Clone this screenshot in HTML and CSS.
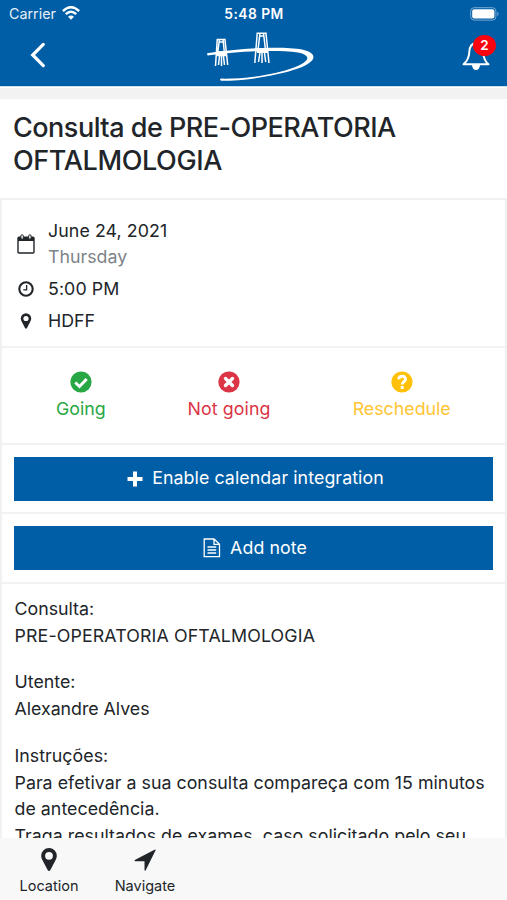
FILE: index.html
```html
<!DOCTYPE html>
<html lang="pt">
<head>
<meta charset="utf-8">
<title>Consulta</title>
<link rel="stylesheet" href="styles.css">
</head>
<body>
<div class="app">
  <header class="header">
    <div class="status">
      <div class="carrier"><span>Carrier</span>
        <svg width="18" height="14" viewBox="0 0 18 14" fill="none" stroke="#fff" stroke-width="2.5"><path d="M.9 5.1Q9-2.5 17.1 5.1M3.8 8.1Q9 3.3 14.2 8.1"/><path d="M9 13.8 6 10.7Q9 8.3 12 10.7Z" fill="#fff" stroke="none"/></svg>
      </div>
      <div class="time">5:48 PM</div>
      <svg class="battery" width="30" height="14" viewBox="0 0 30 14"><rect x=".7" y=".7" width="25.2" height="12.4" rx="3.4" fill="none" stroke="#79a9d3"/><rect x="2.2" y="2.2" width="22.2" height="9.4" rx="2" fill="#fff"/><path d="M27.3 4.6Q29.8 7 27.3 9.2Z" fill="#79a9d3"/></svg>
    </div>
    <div class="nav">
      <svg class="back" width="16" height="26" viewBox="0 0 16 26" fill="none" stroke="#fff" stroke-width="3.2" stroke-linecap="round"><path d="M13.3 2.4 2.7 13 13.3 23.6"/></svg>
      <svg class="logo" width="110" height="52" viewBox="0 0 110 52" fill="#fff"><path d="M0 23.300C35 17.800 76 16 95 19.500C112 23 109.500 32 91 38.500C68 46.500 35 51 14 50.800Q12 49.500 14 48.600C38 49 67 45 87 37.500C103 31.500 105 25.500 91 22.500C68 19.500 34 21.300 .5 25.500Z"/><g fill="none" stroke="#fff" stroke-width="1.500"><path d="M10.300 8.800 8.500 36M12.500 9 10.500 24M16 9 17.500 24M17.900 8.800 20.700 35M9.800 9.600H18.200M12 12H17M14.500 22V36M13 22 11.500 35M16 22 17.500 35M50.300 2.500 47.800 33M53 3 51 20M56.500 3 58.500 20M58.900 2.500 62 33M50 3.300H59.200M52 6H57.500M55 19V33M53.500 19 51.500 32M57 19 58.700 32"/><path d="M10 23.800H19.500M50 20.500H61" stroke-width="5"/></g></svg>
      <div class="bell">
        <svg width="28" height="30" viewBox="0 0 28 30" fill="none" stroke="#fff" stroke-width="2" stroke-linejoin="round"><path d="M14 2C9 2.500 7.500 6 7.300 11C7 17 5.500 20 1.500 23.300H26.500C22.500 20 21.500 17 21 11C20.600 5.500 18.500 2.500 14 2Z"/><path d="M10 24H18Q17.500 29 14 29Q10.500 29 10 24Z" fill="#fff" stroke="none"/></svg>
        <span class="badge">2</span>
      </div>
    </div>
  </header>

  <main class="content">
    <h1><span class="t1">Consulta de PRE-OPERATORIA</span><br>OFTALMOLOGIA</h1>
    <div class="card">
      <section class="details">
        <div class="row">
          <svg width="18" height="20" viewBox="0 0 18 20"><path d="M1 4.300Q1 3.300 2 3.300H16Q17 3.300 17 4.300V18Q17 19 16 19H2Q1 19 1 18Z" fill="none" stroke="#212529" stroke-width="1.400"/><path d="M1 3.500H17V7H1Z" fill="#212529"/><g fill="#fff" stroke="#212529"><rect x="3.900" y=".8" width="2.400" height="4.400" rx="1.100"/><rect x="11.700" y=".8" width="2.400" height="4.400" rx="1.100"/></g></svg>
          <div><div class="date">June 24, 2021</div><div class="day">Thursday</div></div>
        </div>
        <div class="row">
          <svg width="18" height="18" viewBox="0 0 18 18" fill="none" stroke="#212529"><circle cx="9" cy="9" r="6.700" stroke-width="2.100"/><path d="M9.600 5V9.800H6.300" stroke-width="1.300"/></svg>
          <div class="hour">5:00 PM</div>
        </div>
        <div class="row">
          <svg width="18" height="18" viewBox="0 0 18 18"><path fill="#212529" fill-rule="evenodd" d="M9 1.200A5.200 5.200 0 0 0 3.800 6.400Q3.800 7.700 4.300 8.700L8 16Q9 17.500 10 16L13.700 8.700Q14.200 7.700 14.200 6.400A5.200 5.200 0 0 0 9 1.200ZM9 3.900A2.600 2.600 0 1 1 9 9.100A2.600 2.600 0 0 1 9 3.900Z"/></svg>
          <div class="place">HDFF</div>
        </div>
      </section>
      <section class="answers">
        <div class="answer going">
          <svg width="22" height="22" viewBox="0 0 22 22"><circle cx="11" cy="11" r="10.600" fill="#28a745"/><path d="M5.300 11.500 9.500 15.500 16.700 8" fill="none" stroke="#fff" stroke-width="3"/></svg>
          <span>Going</span>
        </div>
        <div class="answer not-going">
          <svg width="22" height="22" viewBox="0 0 22 22"><circle cx="11" cy="11" r="10.600" fill="#dc3545"/><path d="M7.500 7.500 14.500 14.500M14.500 7.500 7.500 14.500" stroke="#fff" stroke-width="3.400" stroke-linecap="round"/></svg>
          <span>Not going</span>
        </div>
        <div class="answer reschedule">
          <svg width="22" height="22" viewBox="0 0 22 22"><circle cx="11" cy="11" r="10.600" fill="#ffc107"/><path d="M7.600 8.200C8.500 4 14.800 4.600 14.500 8.400C14.300 10.800 11.200 10.600 11.200 13.600" fill="none" stroke="#fff" stroke-width="2.900"/><path d="M9.700 15H12.700V17.900H9.700Z" fill="#fff"/></svg>
          <span>Reschedule</span>
        </div>
      </section>
      <section class="action">
        <button class="enable"><svg width="16" height="16" viewBox="0 0 16 16"><path d="M6 .5H10V6H15.500V10H10V15.500H6V10H.5V6H6Z" fill="#fff"/></svg><span>Enable calendar integration</span></button>
      </section>
      <section class="action">
        <button class="note"><svg width="18" height="20" viewBox="0 0 18 20" fill="none" stroke="#fff" stroke-width="1.300"><path d="M1.200 1H11L16.500 6.300V18.700H1.200ZM11 1V6.300H16.500M4.500 9H13.200M4.500 12H13.200M4.500 15H13.200"/></svg><span>Add note</span></button>
      </section>
      <section class="text">
        <p><span>Consulta:</span><br><span class="subject">PRE-OPERATORIA OFTALMOLOGIA</span></p>
        <p><span>Utente:</span><br><span class="name">Alexandre Alves</span></p>
        <p class="instructions"><span>Instruções:</span><br><span>Para efetivar a sua consulta compareça com 15 minutos</span><br><span>de antecedência.</span><br><span>Traga resultados de exames, caso solicitado pelo seu</span></p>
      </section>
    </div>
  </main>

  <footer class="tabs">
    <div class="tab location">
      <svg width="24" height="26" viewBox="0 0 24 26"><path fill="#212529" fill-rule="evenodd" d="M12 1A7.800 7.800 0 0 0 4.200 8.800Q4.200 10.700 5 12.200L10.600 23Q12 25 13.400 23L19 12.200Q19.800 10.700 19.800 8.800A7.800 7.800 0 0 0 12 1ZM12 4.900A3.900 3.900 0 1 1 12 12.700A3.900 3.900 0 0 1 12 4.900Z"/></svg>
      <span>Location</span>
    </div>
    <div class="tab navigate">
      <svg width="24" height="26" viewBox="0 0 24 26"><path d="M22.600 3.200 12.700 23.200Q11.500 24.500 11.500 22.500V14.300H3Q.5 14 2.300 12.700L21.500 2.800Q22.700 2.300 22.600 3.200Z" fill="#212529"/></svg>
      <span>Navigate</span>
    </div>
  </footer>
</div>
</body>
</html>
```
FILE: styles.css
```css
* { box-sizing: border-box; }
body { margin: 0; background: #fff; }
.app {
  width: 507px; height: 900px; overflow: hidden;
  display: flex; flex-direction: column;
  font-family: Inter, "Liberation Sans", sans-serif;
  font-size: 17.8px; line-height: 26.7px; color: #212529;
}
span { white-space: nowrap; }
svg { display: block; flex: none; }
.header { height: 86px; flex: none; background: #005ea6; color: #fff; }
.status {
  height: 28px; padding: 0 7px 0 9px; display: grid;
  grid-template-columns: 1fr auto 1fr; align-items: center; line-height: 28px;
}
.carrier { display: flex; align-items: center; gap: 6px; font-size: 14.3px; color: #e6eff7; }
.carrier svg { margin-top: -2px; }
.time { font-size: 13.8px; font-weight: 600; letter-spacing: .45px; margin-right: 1px; }
.battery { justify-self: end; margin-top: -1px; }
.nav { height: 58px; padding: 0 14px 0 30px; display: grid; grid-template-columns: 1fr 110px 1fr; }
.back { margin-top: 14px; }
.logo { margin: 2px 0 0; }
.bell { position: relative; justify-self: end; width: 31px; margin-top: 13px; }
.badge {
  position: absolute; left: 11px; top: -6px; width: 23px; height: 21px;
  border-radius: 50%; background: #fa0410; font-size: 13.500px; font-weight: 600;
  line-height: 20px; text-align: center;
}
.content { height: 752px; flex: none; overflow: hidden; border-top: 1px solid #cce0ee; }
.content::before { content: ""; display: block; height: 11px; background: #f2f2f2; margin-top: 1px; }
h1 { margin: 0; height: 99px; padding: 12px 13px 0; font-size: 27px; font-weight: 460; line-height: 33px; white-space: nowrap; letter-spacing: -.38px; }
.t1 { letter-spacing: -.5px; }
.card { border: 2px solid #f1f1f2; border-bottom: 0; }
.card section { border-bottom: 2px solid #f2f2f2; }
.details { height: 148px; padding: 17.500px 0 0 15px; display: flex; flex-direction: column; gap: 5.200px; }
.date, .hour { letter-spacing: .08px; }
.row { display: flex; align-items: center; gap: 13px; }
.day { color: #7d8388; }
.answers { height: 96.500px; padding-top: 23px; display: flex; }
.answer { display: flex; flex-direction: column; align-items: center; gap: 3px; }
.going { width: 158px; color: #28a745; }
.not-going { width: 139px; color: #dc3545; letter-spacing: .08px; }
.reschedule { width: 207px; color: #ffc533; }
.action { height: 69.500px; padding: 12px 12px 0; }
button {
  width: 100%; height: 44px; padding: 0; border: 0; background: #005ea6; color: #fff;
  display: flex; align-items: center; justify-content: center; gap: 9px; font: inherit;
  letter-spacing: .08px;
}
.enable { padding-left: 4px; }
.note { padding-left: 3px; }
.card section.text { padding: 12.500px 12.500px 0; border: 0; }
p { margin: 0 0 20px; }
.subject { letter-spacing: .13px; }
.name { letter-spacing: -.03px; }
.instructions { letter-spacing: .03px; }
.tabs { height: 62px; flex: none; background: #f8f8f8; display: flex; font-size: 14.500px; line-height: 20px; }
.tab { width: 96px; padding-top: 9px; display: flex; flex-direction: column; align-items: center; gap: 3px; }
.location { margin-left: 1px; }
```
